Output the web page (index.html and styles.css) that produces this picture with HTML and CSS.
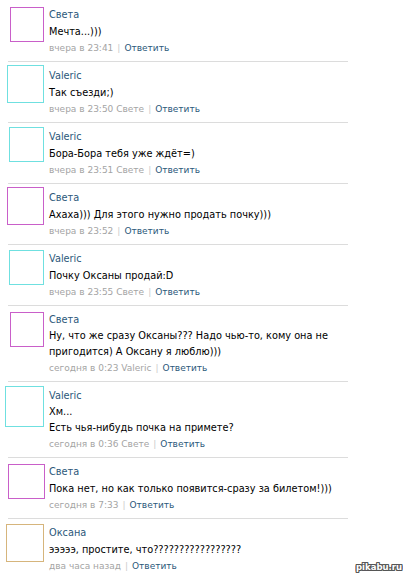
FILE: index.html
```html
<!DOCTYPE html>
<html lang="ru">
<head>
<meta charset="utf-8">
<title>Комментарии</title>
<link rel="stylesheet" href="styles.css">
</head>
<body>
<div class="list">
  <div class="comment c1">
    <div class="ava-col"><div class="ava sveta a1"></div></div>
    <div class="body">
      <div class="name">Света</div>
      <div class="text">Мечта...)))</div>
      <div class="meta">вчера в 23:41<span class="bar">|</span><span class="reply">Ответить</span></div>
    </div>
  </div>
  <div class="sep"></div>
  <div class="comment">
    <div class="ava-col"><div class="ava valeric a2"></div></div>
    <div class="body">
      <div class="name">Valeric</div>
      <div class="text">Так съезди;)</div>
      <div class="meta">вчера в 23:50 Свете<span class="bar">|</span><span class="reply">Ответить</span></div>
    </div>
  </div>
  <div class="sep"></div>
  <div class="comment">
    <div class="ava-col"><div class="ava valeric a3"></div></div>
    <div class="body">
      <div class="name">Valeric</div>
      <div class="text">Бора-Бора тебя уже ждёт=)</div>
      <div class="meta">вчера в 23:51 Свете<span class="bar">|</span><span class="reply">Ответить</span></div>
    </div>
  </div>
  <div class="sep"></div>
  <div class="comment">
    <div class="ava-col"><div class="ava sveta a4"></div></div>
    <div class="body">
      <div class="name">Света</div>
      <div class="text">Ахаха))) Для этого нужно продать почку)))</div>
      <div class="meta">вчера в 23:52<span class="bar">|</span><span class="reply">Ответить</span></div>
    </div>
  </div>
  <div class="sep"></div>
  <div class="comment">
    <div class="ava-col"><div class="ava valeric a5"></div></div>
    <div class="body">
      <div class="name">Valeric</div>
      <div class="text">Почку Оксаны продай:D</div>
      <div class="meta">вчера в 23:55 Свете<span class="bar">|</span><span class="reply">Ответить</span></div>
    </div>
  </div>
  <div class="sep"></div>
  <div class="comment">
    <div class="ava-col"><div class="ava sveta a6"></div></div>
    <div class="body">
      <div class="name">Света</div>
      <div class="text multi">Ну, что же сразу Оксаны??? Надо чью-то, кому она не пригодится) А Оксану я люблю)))</div>
      <div class="meta">сегодня в 0:23 Valeric<span class="bar">|</span><span class="reply">Ответить</span></div>
    </div>
  </div>
  <div class="sep"></div>
  <div class="comment">
    <div class="ava-col"><div class="ava valeric a7"></div></div>
    <div class="body">
      <div class="name">Valeric</div>
      <div class="text multi">Хм...<br>Есть чья-нибудь почка на примете?</div>
      <div class="meta">сегодня в 0:36 Свете<span class="bar">|</span><span class="reply">Ответить</span></div>
    </div>
  </div>
  <div class="sep"></div>
  <div class="comment">
    <div class="ava-col"><div class="ava sveta a8"></div></div>
    <div class="body">
      <div class="name">Света</div>
      <div class="text">Пока нет, но как только появится-сразу за билетом!)))</div>
      <div class="meta">сегодня в 7:33<span class="bar">|</span><span class="reply">Ответить</span></div>
    </div>
  </div>
  <div class="sep"></div>
  <div class="comment">
    <div class="ava-col"><div class="ava oksana a9"></div></div>
    <div class="body">
      <div class="name">Оксана</div>
      <div class="text">эээээ, простите, что?????????????????</div>
      <div class="meta">два часа назад<span class="bar">|</span><span class="reply">Ответить</span></div>
    </div>
  </div>
  <div class="sep"></div>
</div>
<div class="watermark">pikabu.ru</div>
</body>
</html>
```

FILE: styles.css
```css
html, body {
  margin: 0;
  padding: 0;
  background: #ffffff;
}
body {
  font-family: "DejaVu Sans", Verdana, sans-serif;
  font-size: 9.75px;
  color: #000000;
  width: 407px;
  height: 579px;
  overflow: hidden;
  position: relative;
}
.list {
  padding-top: 1px;
}
.comment {
  display: flex;
  padding: 5px 0 4px 0;
}
.ava-col {
  width: 44px;
  flex: none;
  display: flex;
  justify-content: flex-end;
  align-items: flex-start;
}
.ava {
  box-sizing: border-box;
  background: #ffffff;
  border: 1px solid #cc66cc;
}
.ava.sveta { border-color: #c95fc9; }
.ava.valeric { border-color: #6fe0e0; }
.ava.oksana { border-color: #d6b57c; }
.a1 { width: 34px; height: 35px; margin-top: 1px; }
.a2 { width: 37px; height: 38px; margin-top: -2px; }
.a3 { width: 35px; height: 35px; margin-top: -1px; }
.a4 { width: 37px; height: 38px; margin-top: -2px; }
.a5 { width: 35px; height: 35px; margin-top: 0px; }
.a6 { width: 34px; height: 35px; margin-top: 1px; }
.a7 { width: 39px; height: 41px; margin-top: -1px; }
.a8 { width: 37px; height: 35px; margin-top: 1px; margin-right: -1px; }
.a9 { width: 38px; height: 38px; margin-top: 0px; }
.body {
  margin-left: 5px;
  width: 300px;
  line-height: 17px;
}
.name {
  color: #2b587a;
}
.text {
  color: #000000;
}
.text.multi {
  line-height: 16px;
}
.meta {
  color: #a4a4a4;
  font-size: 9px;
}
.bar {
  color: #cccccc;
  margin: 0 4px;
}
.reply {
  color: #2b587a;
}
.sep {
  margin-left: 8px;
  width: 340px;
  height: 1px;
  background: #dcdcdc;
}
.watermark {
  position: absolute;
  right: 5px;
  bottom: 7px;
  font-family: "DejaVu Sans", Verdana, sans-serif;
  font-weight: bold;
  font-size: 8.5px;
  color: #ffffff;
  text-shadow: -1px 0 #555, 1px 0 #555, 0 -1px #555, 0 1px #555, -1px -1px #555, 1px 1px #555, -1px 1px #555, 1px -1px #555;
}
```
